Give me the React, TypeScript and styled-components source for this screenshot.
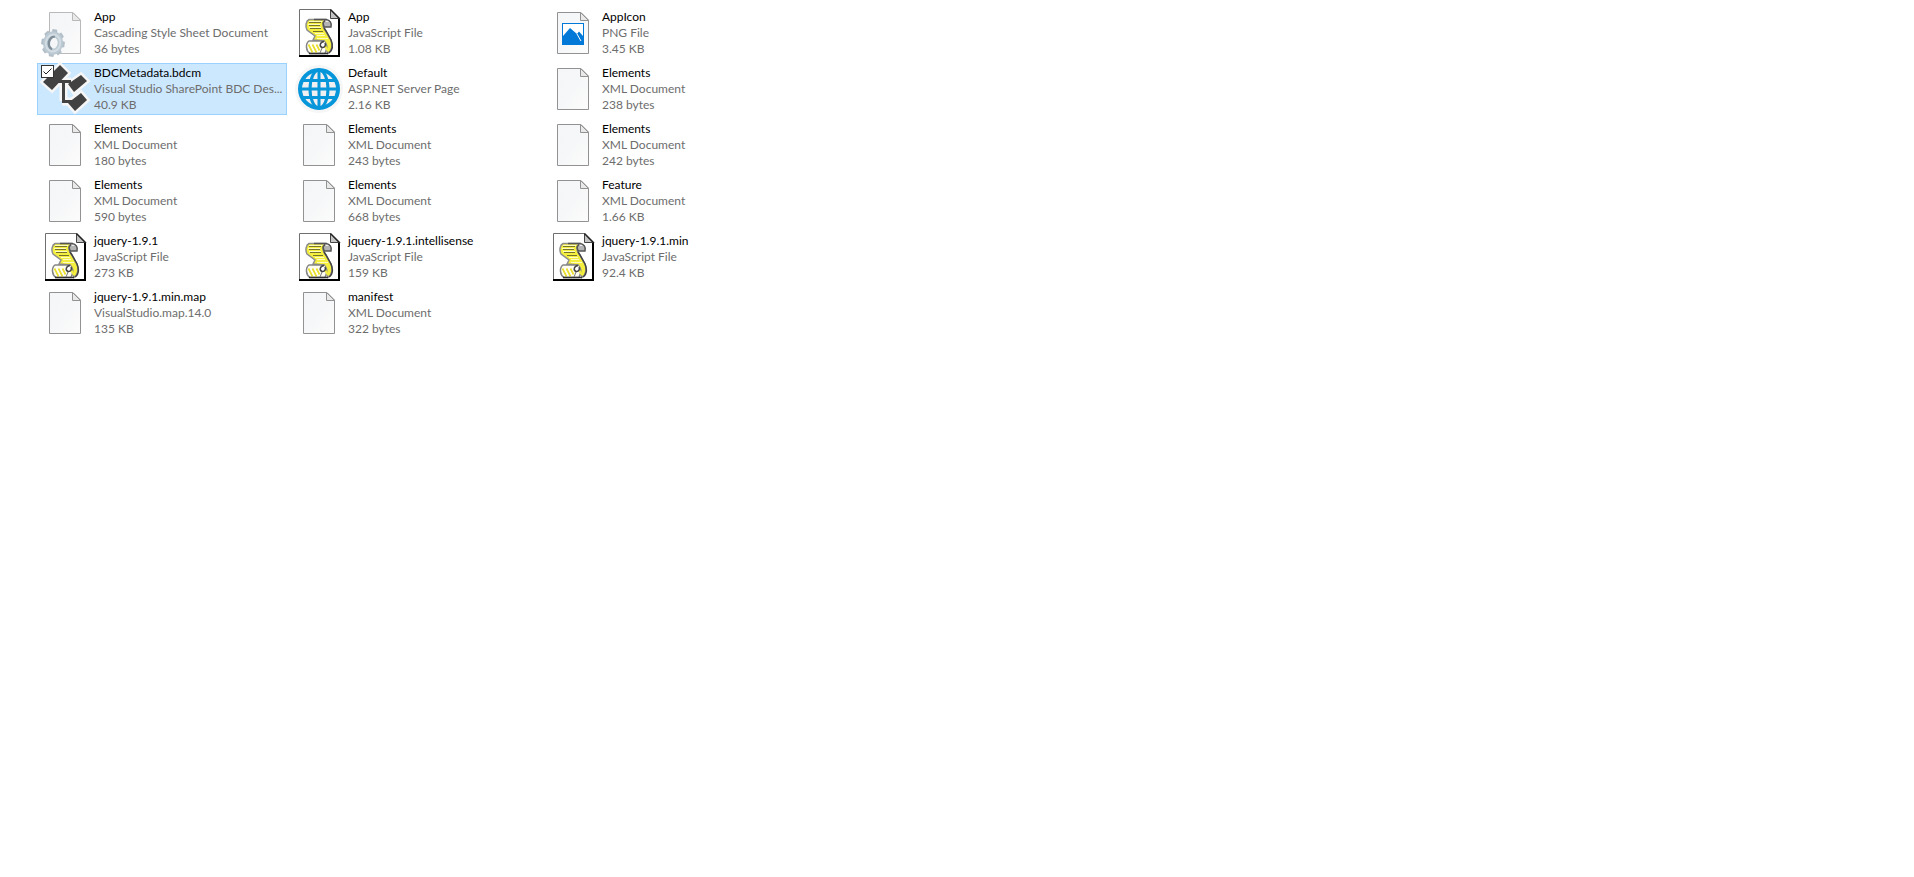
import React, { useState } from "react";
import styled, { createGlobalStyle } from "styled-components";

const GlobalStyle = createGlobalStyle`
  * { box-sizing: border-box; }
  body {
    margin: 0;
    background: #fff;
    font-family: Lato, "Open Sans", sans-serif;
    font-size: 12px;
    line-height: 16px;
  }
`;

const Pane = styled.main`
  min-height: 100vh;
  padding: 7px 37px;
`;

const TileGrid = styled.ul`
  display: grid;
  grid-template-columns: repeat(3, 250px);
  gap: 4px;
  margin: 0;
  padding: 0;
  list-style: none;
`;

const Tile = styled.li<{ $selected?: boolean }>`
  position: relative;
  display: flex;
  align-items: center;
  gap: 5px;
  height: 52px;
  padding: 0 0 0 3px;
  border: 1px solid ${(p) => (p.$selected ? "#99d1ff" : "transparent")};
  background: ${(p) => (p.$selected ? "#cce8ff" : "transparent")};
`;

const IconFrame = styled.svg`
  flex: none;
  width: 48px;
  height: 48px;
  overflow: visible;
`;

const Details = styled.label`
  display: flex;
  flex-direction: column;
  min-width: 0;
  flex: 1;
`;

const Line = styled.span<{ $name?: boolean }>`
  white-space: nowrap;
  color: ${(p) => (p.$name ? "#000" : "#6d6d6d")};
`;

const Check = styled.input`
  appearance: none;
  position: absolute;
  top: 1px;
  left: 3px;
  width: 13px;
  height: 13px;
  margin: 0;
  border: 1px solid #333;
  background: #fff;
  opacity: 0;

  &:checked,
  &:focus-visible,
  ${Tile}:hover & {
    opacity: 1;
  }
`;

const CheckMark = styled.svg`
  position: absolute;
  top: 1px;
  left: 3px;
  width: 13px;
  height: 13px;
  pointer-events: none;
`;

type Kind = "css" | "js" | "png" | "bdcm" | "aspx" | "blank";

function Page({ light }: { light?: boolean }) {
  const stroke = light ? "#b9b9b9" : "#929292";
  return (
    <>
      <path d="M8.500 3.500H32L39.500 11V44.500H8.500Z" fill="url(#paper)" stroke={stroke} />
      <path d="M31.500 3.500V11.500H39.500Z" fill="#e9e9e9" stroke={stroke} />
    </>
  );
}

function Gear() {
  const teeth = [0, 45, 90, 135, 180, 225, 270, 315];
  return (
    <g transform="translate(12 34) rotate(8) scale(0.9 1.06)">
      {teeth.map((angle) => (
        <path key={angle} d="M-3.500 -8L-2.500 -13H2.500L3.500 -8Z" fill="#b3bfc8" transform={`rotate(${angle})`} />
      ))}
      <circle r="8" fill="none" stroke="#bccad3" strokeWidth="6" />
      <circle r="8" fill="none" stroke="#d3dde3" strokeWidth="2" />
      <path d="M1 -5.500A5 5.500 0 0 0 0 5.500" fill="none" stroke="#7f8d98" strokeWidth="3" />
      <ellipse cx="1" rx="4" ry="5" fill="#f4f6f7" />
    </g>
  );
}

function ScriptFile() {
  return (
    <>
      <path d="M4.500 0.500H35L44.500 10V47H4.500Z" fill="#fff" stroke="#707070" />
      <path d="M44 10V47H4" fill="none" stroke="#000" strokeWidth="2" />
      <path d="M35.500 0.500V9.500H44Z" fill="#c4c4c4" stroke="#444" />
      <path d="M35.500 0.500L45 10" stroke="#222" strokeWidth="1.500" />
      <path
        d="M14 10.500H32C28 12 27 16 29 19L36 31C38 36 37 42 33 44.500L29 32L18 31L20 27L12 21C10 17 11 12 14 10.500Z"
        fill="#f4ee3e"
        stroke="#8d8d8d"
        strokeWidth="1.500"
      />
      <path d="M19 10.500H31C35 11 37 14 36 18H29L28 14L30 11.500" fill="#b4b4b4" stroke="#555" strokeWidth="1.500" />
      <path d="M30 13L34 13L32 11.500Z" fill="#eee" />
      <path d="M29 19L31 22L36 31C38 36 38 41 34 44" fill="none" stroke="#444" strokeWidth="1.500" />
      <path d="M14 13.500H26M14 16.500H25M15 19.500H26M18 22.500H28" stroke="#77722a" />
      <path d="M14 12.500H27M13 15.500H25M14 18.500H26M20 24.500H29M22 26.500H30M22 29.500H33" stroke="#fffcc0" />
      <path
        d="M14 32H29C32 34 33 39 30 44.500H15C11 42 10 35 14 32Z"
        fill="#fffef0"
        stroke="#858585"
        strokeWidth="1.500"
      />
      <path d="M13 36.500H15M17 36.500H19M21 36.500H23M14 38.500H16M18 38.500H20M22 38.500H24M15 40.500H17M19 40.500H21M23 40.500H25M16 42.500H18M20 42.500H22" stroke="#e9df30" strokeWidth="2" />
      <path d="M30 37L33 42M32 33L35 38" stroke="#f4ee3e" strokeWidth="2" />
      <path d="M14 44.500H33" stroke="#333" strokeWidth="1.500" />
      <path d="M29 32.500C25 33 24 37 27 38.500C30 39 31 36 30 34" fill="#fff" stroke="#444" strokeWidth="1.500" />
      <path d="M27 39L25 44" stroke="#777" />
    </>
  );
}

function Globe() {
  return (
    <>
      <circle cx="24" cy="24" r="24" fill="#f6f6f6" />
      <circle cx="24" cy="24" r="19" fill="#f0eff1" />
      <g fill="none" stroke="#0696d9">
        <circle cx="24" cy="24" r="19" strokeWidth="4" />
        <ellipse cx="24" cy="24" rx="9" ry="19" strokeWidth="3" />
        <path d="M24 5V43M5 24H43M8 15.500H40M8 32.500H40" strokeWidth="3" />
      </g>
    </>
  );
}

function Connector() {
  const blocks = "M2 17L19 0L27 8L11 25ZM27 19L40 10L46 16L33 27ZM27 38L40 28L46 35L34 46Z";
  const wires = "M14 16.500H30M22.500 16V36M21 36.500H31";
  return (
    <>
      <g stroke="#f6f6f6" fill="#f6f6f6">
        <path d={blocks} strokeWidth="5" />
        <path d={wires} strokeWidth="8" />
      </g>
      <path d={blocks} fill="#424242" />
      <path d={wires} stroke="#424242" strokeWidth="3" />
    </>
  );
}

function Picture() {
  return (
    <>
      <Page />
      <path d="M13 14H35V36H13Z" fill="#0078d7" />
      <path d="M14 15H34V27L30 22.500L28 25L21 19L14 27Z" fill="#fff" />
      <path d="M28 25L32 32" stroke="#fff" />
    </>
  );
}

function FileIcon({ kind }: { kind: Kind }) {
  return (
    <IconFrame viewBox="0 0 48 48" aria-hidden="true">
      {kind === "blank" && <Page />}
      {kind === "css" && (
        <>
          <Page light />
          <Gear />
        </>
      )}
      {kind === "js" && <ScriptFile />}
      {kind === "png" && <Picture />}
      {kind === "aspx" && <Globe />}
      {kind === "bdcm" && <Connector />}
    </IconFrame>
  );
}

const files: { name: string; type: string; size: string; kind: Kind }[] = [
  { name: "App", type: "Cascading Style Sheet Document", size: "36 bytes", kind: "css" },
  { name: "App", type: "JavaScript File", size: "1.08 KB", kind: "js" },
  { name: "AppIcon", type: "PNG File", size: "3.45 KB", kind: "png" },
  { name: "BDCMetadata.bdcm", type: "Visual Studio SharePoint BDC Des...", size: "40.9 KB", kind: "bdcm" },
  { name: "Default", type: "ASP.NET Server Page", size: "2.16 KB", kind: "aspx" },
  { name: "Elements", type: "XML Document", size: "238 bytes", kind: "blank" },
  { name: "Elements", type: "XML Document", size: "180 bytes", kind: "blank" },
  { name: "Elements", type: "XML Document", size: "243 bytes", kind: "blank" },
  { name: "Elements", type: "XML Document", size: "242 bytes", kind: "blank" },
  { name: "Elements", type: "XML Document", size: "590 bytes", kind: "blank" },
  { name: "Elements", type: "XML Document", size: "668 bytes", kind: "blank" },
  { name: "Feature", type: "XML Document", size: "1.66 KB", kind: "blank" },
  { name: "jquery-1.9.1", type: "JavaScript File", size: "273 KB", kind: "js" },
  { name: "jquery-1.9.1.intellisense", type: "JavaScript File", size: "159 KB", kind: "js" },
  { name: "jquery-1.9.1.min", type: "JavaScript File", size: "92.4 KB", kind: "js" },
  { name: "jquery-1.9.1.min.map", type: "VisualStudio.map.14.0", size: "135 KB", kind: "blank" },
  { name: "manifest", type: "XML Document", size: "322 bytes", kind: "blank" },
];

const Definitions = styled.svg`
  display: block;
  width: 0;
  height: 0;
`;

export default function App() {
  const [selected, setSelected] = useState<number[]>([3]);
  const toggle = (i: number) =>
    setSelected((s) => (s.includes(i) ? s.filter((n) => n !== i) : [...s, i]));

  return (
    <Pane>
      <GlobalStyle />
      <Definitions aria-hidden="true">
        <linearGradient id="paper" x1="0" y1="0" x2="1" y2="1">
          <stop offset="0" stopColor="#f5f6f7" />
          <stop offset="0.500" stopColor="#f6f7f8" />
          <stop offset="1" stopColor="#fcfcfc" />
        </linearGradient>
      </Definitions>
      <TileGrid>
        {files.map((file, i) => {
          const isSelected = selected.includes(i);
          return (
            <Tile key={i} $selected={isSelected}>
              <FileIcon kind={file.kind} />
              <Check type="checkbox" id={`file-${i}`} checked={isSelected} onChange={() => toggle(i)} />
              {isSelected && (
                <CheckMark viewBox="0 0 13 13" aria-hidden="true">
                  <path d="M2.500 6.500L5 9L10.500 3.500" fill="none" stroke="#222" />
                </CheckMark>
              )}
              <Details htmlFor={`file-${i}`}>
                <Line $name>{file.name}</Line>
                <Line>{file.type}</Line>
                <Line>{file.size}</Line>
              </Details>
            </Tile>
          );
        })}
      </TileGrid>
    </Pane>
  );
}
